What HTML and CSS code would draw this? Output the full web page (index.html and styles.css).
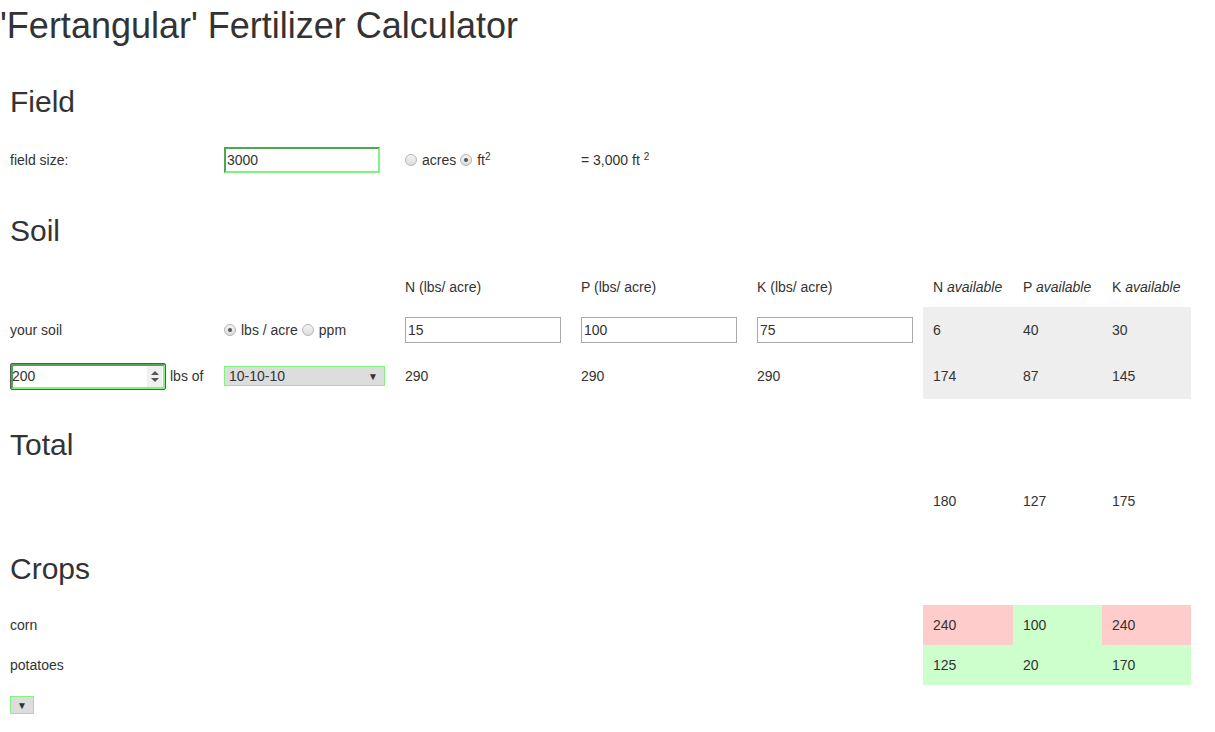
FILE: index.html
```html
<!DOCTYPE html>
<html>
<head>
<meta charset="utf-8">
<title>Fertangular</title>
<link rel="stylesheet" href="styles.css">
</head>
<body>
<h1 class="title">'Fertangular' Fertilizer Calculator</h1>

<h2 class="section">Field</h2>
<div class="grid row-field">
  <div class="cell">field size:</div>
  <div class="cell"><input class="txt valid" type="text" value="3000"></div>
  <div class="cell radios">
    <span class="radio"></span><span class="rlabel">acres</span>
    <span class="radio on"></span><span class="rlabel">ft<sup>2</sup></span>
  </div>
  <div class="cell span2"><span>= 3,000 ft <sup>2</sup></span></div>
</div>

<h2 class="section soil-h">Soil</h2>
<div class="grid row-head">
  <div class="cell"></div>
  <div class="cell"></div>
  <div class="cell">N (lbs/ acre)</div>
  <div class="cell">P (lbs/ acre)</div>
  <div class="cell">K (lbs/ acre)</div>
  <div class="cell"><span>N <i>available</i></span></div>
  <div class="cell"><span>P <i>available</i></span></div>
  <div class="cell"><span>K <i>available</i></span></div>
</div>
<div class="grid row-soil">
  <div class="cell">your soil</div>
  <div class="cell radios">
    <span class="radio on"></span><span class="rlabel">lbs / acre</span>
    <span class="radio"></span><span class="rlabel">ppm</span>
  </div>
  <div class="cell"><input class="txt plain" type="text" value="15"></div>
  <div class="cell"><input class="txt plain" type="text" value="100"></div>
  <div class="cell"><input class="txt plain" type="text" value="75"></div>
  <div class="cell gray">6</div>
  <div class="cell gray">40</div>
  <div class="cell gray">30</div>
</div>
<div class="grid row-soil">
  <div class="cell fert">
    <div class="num-wrap">
      <input class="num" type="text" value="200">
      <span class="spin"><span class="up"></span><span class="down"></span></span>
    </div>
    <span class="lbs">lbs of</span>
  </div>
  <div class="cell">
    <div class="sel wide"><span>10-10-10</span><span class="arrow">&#9660;</span></div>
  </div>
  <div class="cell">290</div>
  <div class="cell">290</div>
  <div class="cell">290</div>
  <div class="cell gray">174</div>
  <div class="cell gray">87</div>
  <div class="cell gray">145</div>
</div>

<h2 class="section total-h">Total</h2>
<div class="grid row-total">
  <div class="cell"></div><div class="cell"></div><div class="cell"></div><div class="cell"></div><div class="cell"></div>
  <div class="cell">180</div>
  <div class="cell">127</div>
  <div class="cell">175</div>
</div>

<h2 class="section crops-h">Crops</h2>
<div class="grid row-crop first">
  <div class="cell">corn</div><div class="cell"></div><div class="cell"></div><div class="cell"></div><div class="cell"></div>
  <div class="cell red">240</div>
  <div class="cell green">100</div>
  <div class="cell red">240</div>
</div>
<div class="grid row-crop">
  <div class="cell">potatoes</div><div class="cell"></div><div class="cell"></div><div class="cell"></div><div class="cell"></div>
  <div class="cell green">125</div>
  <div class="cell green">20</div>
  <div class="cell green">170</div>
</div>
<div class="add-row">
  <div class="sel small"><span class="arrow">&#9660;</span></div>
</div>
</body>
</html>
```

FILE: styles.css
```css
html, body {
  margin: 0;
  padding: 0;
  background: #fff;
}
body {
  font-family: "Liberation Sans", Arial, sans-serif;
  font-size: 14px;
  color: #333;
  padding-top: 6px;
}
.title {
  font-size: 36px;
  font-weight: 500;
  line-height: 40px;
  margin: 0;
}
.section {
  font-size: 30px;
  font-weight: 500;
  line-height: 33px;
  margin: 39px 0 0 10px;
}
.soil-h { margin-top: 34px; }
.total-h { margin-top: 29px; }
.crops-h { margin-top: 31px; }

.grid {
  display: grid;
  grid-template-columns: 214px 181px 176px 176px 176px 90px 89px 89px;
}
.cell {
  padding-left: 10px;
  display: flex;
  align-items: center;
  white-space: nowrap;
}
.span2 { grid-column: span 2; }
.row-field { height: 40px; margin-top: 22px; }
.row-head { height: 40px; margin-top: 20px; }
.row-soil { height: 46px; }
.row-total { height: 40px; margin-top: 20px; }
.row-crop { height: 40px; }
.row-crop.first { margin-top: 20px; }

.gray { background: #eee; }
.red { background: #fcc; }
.green { background: #cfc; }

sup { font-size: 10px; line-height: 0; vertical-align: 5px; }

.txt {
  box-sizing: border-box;
  width: 156px;
  height: 26px;
  font: 14px "Liberation Sans", Arial, sans-serif;
  color: #333;
  padding: 0 2px;
  margin: 0;
  outline: none;
  background: #fff;
}
.txt.plain { border: 1px solid #a9a9a9; }
.txt.valid {
  border-style: solid;
  border-width: 2px;
  border-color: #4ea64e #7ff47f #7ff47f #4ea64e;
  padding: 0 1px;
}

.radio {
  box-sizing: border-box;
  width: 12px;
  height: 12px;
  border-radius: 50%;
  border: 1px solid #b5b5b5;
  background: linear-gradient(#f4f4f4, #dcdcdc);
  display: inline-block;
  position: relative;
  margin-right: 5px;
}
.radio.on::after {
  content: "";
  position: absolute;
  left: 3px;
  top: 3px;
  width: 4px;
  height: 4px;
  border-radius: 50%;
  background: #555;
}
.rlabel { margin-right: 4px; }

.fert { gap: 4px; }
.num-wrap {
  box-sizing: border-box;
  width: 156px;
  height: 27px;
  border: 1px solid #5a5a5a;
  border-radius: 2px;
  display: flex;
  align-items: center;
  background: #fff;
  box-shadow: inset 1px 1px 0 #4ea64e, inset -1px -1px 0 #7ff47f, inset 2px 2px 0 #4ea64e, inset -2px -2px 0 #7ff47f;
  padding: 2px 2px 2px 1px;
}
.num {
  flex: 1;
  min-width: 0;
  border: none;
  outline: none;
  background: transparent;
  font: 14px "Liberation Sans", Arial, sans-serif;
  color: #333;
  padding: 0;
  margin: 0;
}
.spin {
  width: 15px;
  height: 21px;
  background: #f0f0f0;
  display: flex;
  flex-direction: column;
  align-items: center;
  justify-content: center;
  gap: 3px;
  margin-right: 1px;
}
.up, .down {
  width: 0;
  height: 0;
  border-left: 4px solid transparent;
  border-right: 4px solid transparent;
}
.up { border-bottom: 4px solid #555; }
.down { border-top: 4px solid #555; }

.sel {
  box-sizing: border-box;
  background: #ddd;
  border: 1px solid #7ff47f;
  display: flex;
  align-items: center;
  color: #333;
}
.sel.wide {
  width: 161px;
  height: 20px;
  padding-left: 4px;
  justify-content: space-between;
}
.sel .arrow {
  font-size: 10px;
  color: #333;
  margin-right: 6px;
}
.sel.small {
  width: 24px;
  height: 18px;
  justify-content: center;
}
.sel.small .arrow { margin: 0; }
.add-row {
  padding-left: 10px;
  margin-top: 11px;
}
```
